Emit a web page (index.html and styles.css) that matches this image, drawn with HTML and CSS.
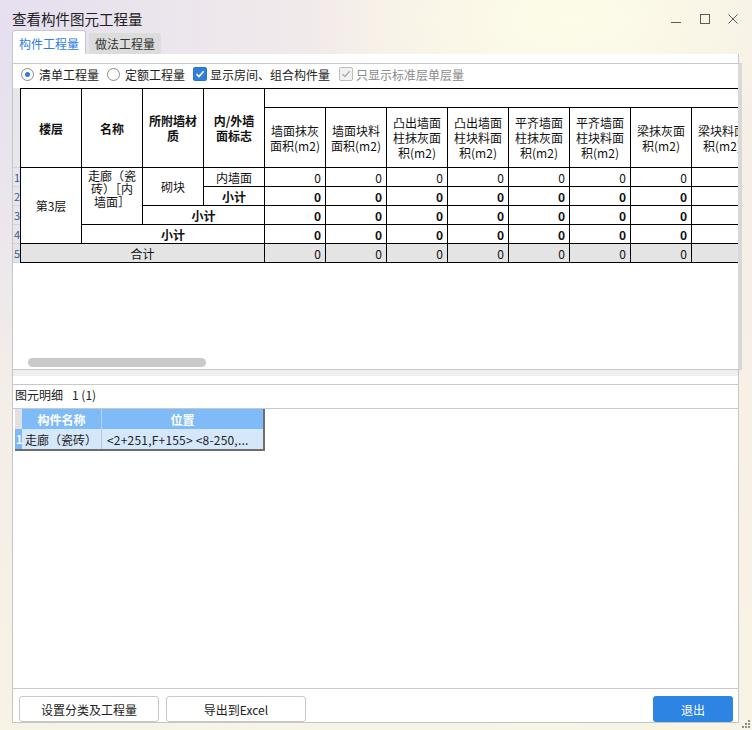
FILE: index.html
```html
<!DOCTYPE html>
<html lang="zh-CN">
<head>
<meta charset="utf-8">
<title>查看构件图元工程量</title>
<link rel="stylesheet" href="styles.css">
</head>
<body>
<div class="window">
  <div class="titlebar">
    <div class="title">查看构件图元工程量</div>
    <div class="ctrls">
      <svg class="ctl ctl-min" width="10" height="10" viewBox="0 0 10 10"><path d="M0 8.5H10" stroke="#5a5a5a" stroke-width="1"/></svg>
      <svg class="ctl ctl-max" width="10" height="10" viewBox="0 0 10 10"><rect x="0.5" y="0.5" width="9" height="9" fill="none" stroke="#5a5a5a" stroke-width="1"/></svg>
      <svg class="ctl ctl-close" width="10" height="10" viewBox="0 0 10 10"><path d="M0.5 0.5L9.5 9.5M9.5 0.5L0.5 9.5" stroke="#5a5a5a" stroke-width="1"/></svg>
    </div>
  </div>

  <div class="tabs">
    <div class="tab tab-active">构件工程量</div>
    <div class="tab tab-idle">做法工程量</div>
  </div>

  <div class="panel">
    <div class="upper">
      <div class="opts">
        <label class="opt opt-gap"><span class="radio radio-on"><span class="dot"></span></span>清单工程量</label>
        <label class="opt opt-gap"><span class="radio"></span>定额工程量</label>
        <label class="opt opt-gap2 opt-tight"><span class="check check-on"><svg width="10" height="10" viewBox="0 0 10 10"><path d="M1.5 5.2L4 7.6L8.6 2.2" fill="none" stroke="#fff" stroke-width="1.6"/></svg></span>显示房间、组合构件量</label>
        <label class="opt opt-tight opt-dis"><span class="check check-dis"><svg width="10" height="10" viewBox="0 0 10 10"><path d="M1.5 5.2L4 7.6L8.6 2.2" fill="none" stroke="#a8a8a8" stroke-width="1.4"/></svg></span>只显示标准层单层量</label>
      </div>
      <div class="tarea">
        <div class="gridwrap">
          <div class="qgrid">
            <!-- header row 1 -->
            <div class="rn rs2"></div>
            <div class="c bt bl rs2 hd">楼层</div>
            <div class="c bt rs2 hd">名称</div>
            <div class="c bt rs2 hd">所附墙材<br>质</div>
            <div class="c bt rs2 hd">内/外墙<br>面标志</div>
            <div class="c bt cs8"></div>
            <!-- header row 2 -->
            <div class="c hn">墙面抹灰<br>面积(m2)</div>
            <div class="c hn">墙面块料<br>面积(m2)</div>
            <div class="c hn">凸出墙面<br>柱抹灰面<br>积(m2)</div>
            <div class="c hn">凸出墙面<br>柱块料面<br>积(m2)</div>
            <div class="c hn">平齐墙面<br>柱抹灰面<br>积(m2)</div>
            <div class="c hn">平齐墙面<br>柱块料面<br>积(m2)</div>
            <div class="c hn">梁抹灰面<br>积(m2)</div>
            <div class="c hn">梁块料面<br>积(m2)</div>
            <!-- data row 1 -->
            <div class="rn">1</div>
            <div class="c bl rs4">第3层</div>
            <div class="c rs3 top">走廊（瓷<br>砖）［内<br>墙面］</div>
            <div class="c rs2">砌块</div>
            <div class="c">内墙面</div>
            <div class="c v">0</div><div class="c v">0</div><div class="c v">0</div><div class="c v">0</div>
            <div class="c v">0</div><div class="c v">0</div><div class="c v">0</div><div class="c v">0</div>
            <!-- data row 2 -->
            <div class="rn">2</div>
            <div class="c b">小计</div>
            <div class="c v b">0</div><div class="c v b">0</div><div class="c v b">0</div><div class="c v b">0</div>
            <div class="c v b">0</div><div class="c v b">0</div><div class="c v b">0</div><div class="c v b">0</div>
            <!-- data row 3 -->
            <div class="rn">3</div>
            <div class="c cs2 b">小计</div>
            <div class="c v b">0</div><div class="c v b">0</div><div class="c v b">0</div><div class="c v b">0</div>
            <div class="c v b">0</div><div class="c v b">0</div><div class="c v b">0</div><div class="c v b">0</div>
            <!-- data row 4 -->
            <div class="rn">4</div>
            <div class="c cs3 b">小计</div>
            <div class="c v b">0</div><div class="c v b">0</div><div class="c v b">0</div><div class="c v b">0</div>
            <div class="c v b">0</div><div class="c v b">0</div><div class="c v b">0</div><div class="c v b">0</div>
            <!-- total row -->
            <div class="rn tot">5</div>
            <div class="c bl cs4 tot">合计</div>
            <div class="c v tot">0</div><div class="c v tot">0</div><div class="c v tot">0</div><div class="c v tot">0</div>
            <div class="c v tot">0</div><div class="c v tot">0</div><div class="c v tot">0</div><div class="c v tot">0</div>
          </div>
        </div>
        <div class="hthumb"></div>
      </div>
    </div>

    <div class="splitter"></div>

    <div class="group">
      <div class="glabel">图元明细<span class="gcount">1 (1)</span></div>
      <div class="lower">
        <div class="dgrid">
          <div class="dn dnh"></div>
          <div class="dh dsep">构件名称</div>
          <div class="dh">位置</div>
          <div class="dn dnr">1</div>
          <div class="dc dcsep">走廊（瓷砖）</div>
          <div class="dc dpos">&lt;2+251,F+155&gt; &lt;8-250,...</div>
        </div>
      </div>
    </div>

    <div class="btnrow">
      <div class="btn btn-w1">设置分类及工程量</div>
      <div class="btn btn-w1">导出到Excel</div>
      <div class="btn btn-primary">退出</div>
    </div>
  </div>

  <div class="grip">
    <span class="gd g1"></span><span class="gd g2"></span><span class="gd g3"></span>
    <span class="gd g4"></span><span class="gd g5"></span><span class="gd g6"></span>
  </div>
</div>
</body>
</html>
```

FILE: styles.css
```css
* { box-sizing: border-box; margin: 0; padding: 0; }

html, body {
  width: 752px;
  height: 730px;
  overflow: hidden;
}

body {
  font-family: "Noto Sans CJK SC", "Noto Sans", sans-serif;
  font-size: 12px;
  color: #222;
  background: #f5f0e8;
}

.window {
  position: relative;
  width: 752px;
  height: 730px;
  background:
    radial-gradient(ellipse 260px 120px at 570px 20px, rgba(253, 252, 232, 1), rgba(253, 252, 232, 0) 100%),
    radial-gradient(ellipse 380px 340px at 0 30px, rgba(229, 223, 240, 1), rgba(229, 223, 240, 0) 100%),
    linear-gradient(180deg, rgba(0, 0, 0, 0) 40%, rgba(248, 245, 228, 0.8) 100%),
    linear-gradient(90deg, #f1ece9 0%, #f5ede9 45%, #f8f2e6 70%, #f6efe6 100%);
}

/* title bar */
.titlebar {
  height: 30px;
  padding-top: 8px;
  padding-left: 12px;
  display: flex;
  align-items: center;
}
.title {
  flex: 1;
  font-size: 14.5px;
  color: #222;
  line-height: 20px;
}
.ctrls {
  display: flex;
  align-items: center;
  margin-right: 14px;
}
.ctl { display: block; }
.ctl-min { margin-right: 19px; }
.ctl-max { margin-right: 18px; }

/* tabs */
.tabs {
  height: 24px;
  margin-left: 12px;
  display: flex;
  align-items: flex-end;
  gap: 3px;
}
.tab {
  display: flex;
  align-items: center;
  justify-content: center;
  font-size: 12px;
  border-radius: 3px 3px 0 0;
}
.tab-active {
  width: 74px;
  height: 24px;
  padding-top: 2px;
  background: #fff;
  border: 1px solid #c8c8c8;
  border-bottom: none;
  color: #2f7be0;
}
.tab-idle {
  width: 72px;
  height: 21px;
  background: #dcdcdc;
  color: #333;
}

/* panel */
.panel {
  margin-left: 12px;
  width: 727px;
  height: 669px;
  background: #fff;
  border-left: 1px solid #c6c6c6;
  border-right: 1px solid #c6c6c6;
  border-bottom: 1px solid #c6c6c6;
  display: flex;
  flex-direction: column;
}

.upper {
  margin-top: 9px;
  height: 307px;
  margin-right: -4px;
  border-top: 1px solid #c8c8c8;
  border-bottom: 1px solid #c8c8c8;
  border-right: 4px solid #d9d9d9;
  display: flex;
  flex-direction: column;
}

.opts {
  height: 24px;
  padding-left: 8px;
  padding-bottom: 4px;
  display: flex;
  align-items: center;
  font-size: 12px;
  color: #222;
}
.opt {
  display: flex;
  align-items: center;
  white-space: nowrap;
}
.opt-gap { gap: 5px; margin-right: 8px; }
.opt-gap2 { margin-right: 9px; }
.opt-tight { gap: 3px; }
.opt-dis { color: #8a8a8a; }

.radio {
  width: 13px;
  height: 13px;
  border: 1px solid #8a8a8a;
  border-radius: 50%;
  background: #fff;
  display: flex;
  align-items: center;
  justify-content: center;
}
.radio-on .dot {
  width: 5px;
  height: 5px;
  border-radius: 50%;
  background: #2f7be0;
}
.check {
  width: 14px;
  height: 14px;
  border-radius: 2px;
  display: flex;
  align-items: center;
  justify-content: center;
}
.check-on {
  background: #2f7fe0;
  border: 1px solid #2a72cc;
}
.check-dis {
  background: #f2f2f2;
  border: 1px solid #bcbcbc;
}

.tarea {
  height: 281px;
  display: flex;
  flex-direction: column;
  overflow: hidden;
}
.gridwrap {
  width: 725px;
  overflow: hidden;
}

.qgrid {
  display: grid;
  grid-template-columns: 7px 62px repeat(11, 61px);
  grid-template-rows: 20px 60px repeat(5, 19px);
  width: max-content;
}

.rn {
  background: #e6e6ec;
  color: #3a5a93;
  font-size: 11px;
  line-height: 18px;
  padding-left: 1px;
  display: flex;
  align-items: center;
  border-bottom: 1px solid #d4d4dc;
}

.c {
  border-right: 1px solid #000;
  border-bottom: 1px solid #000;
  display: flex;
  align-items: center;
  justify-content: center;
  text-align: center;
  white-space: nowrap;
  overflow: hidden;
  font-size: 12px;
  line-height: 17px;
  color: #111;
}
.bt { border-top: 1px solid #000; }
.bl { border-left: 1px solid #000; }
.rs2 { grid-row: span 2; }
.rs3 { grid-row: span 3; }
.rs4 { grid-row: span 4; }
.cs2 { grid-column: span 2; }
.cs3 { grid-column: span 3; }
.cs4 { grid-column: span 4; }
.cs8 { grid-column: span 8; }
.hd { font-weight: 700; line-height: 15px; }
.hn { line-height: 15px; }
.top { align-items: flex-start; padding-top: 1px; line-height: 13px; }
.v { justify-content: flex-end; padding-right: 4px; }
.b { font-weight: 700; }
.tot { background: #e4e4e4; }

.hthumb {
  margin-top: auto;
  margin-bottom: 2px;
  margin-left: 15px;
  width: 178px;
  height: 9px;
  border-radius: 5px;
  background: #c9c9c9;
}

.splitter {
  height: 6px;
  background: #efefef;
}

.group {
  margin-top: 8px;
  border-top: 1px solid #c8c8c8;
}
.glabel {
  height: 23px;
  line-height: 20px;
  padding-left: 2px;
  font-size: 12px;
  color: #222;
}
.gcount { margin-left: 9px; }
.lower {
  height: 281px;
  border-top: 1px solid #c8c8c8;
  border-bottom: 1px solid #c8c8c8;
  padding-left: 2px;
}

.dgrid {
  display: grid;
  grid-template-columns: 7px 80px 161px;
  grid-template-rows: 20px 20px;
  width: 250px;
  border-right: 2px solid #6e6e6e;
  border-bottom: 2px solid #6e6e6e;
}
.dn {
  font-size: 11px;
  display: flex;
  align-items: center;
}
.dnh { background: #e0e0e0; }
.dnr {
  background: #7cb8f6;
  color: #fff;
  font-weight: 700;
  padding-left: 1px;
}
.dh {
  background: #7fbbf6;
  color: #fff;
  font-weight: 700;
  font-size: 12px;
  display: flex;
  align-items: center;
  justify-content: center;
}
.dsep { border-right: 1px solid #b4d5f8; }
.dc {
  background: #d5e8fb;
  color: #222;
  font-size: 12px;
  display: flex;
  align-items: center;
  white-space: nowrap;
  overflow: hidden;
}
.dcsep {
  padding-left: 3px;
  border-right: 1px solid #c4c4c4;
}
.dpos {
  padding-left: 5px;
  font-size: 12px;
  letter-spacing: 0.2px;
}

.btnrow {
  margin-top: 7px;
  height: 26px;
  padding: 0 5px 0 6px;
  display: flex;
  gap: 7px;
}
.btn {
  height: 26px;
  border-radius: 3px;
  display: flex;
  align-items: center;
  justify-content: center;
  font-size: 12px;
  color: #222;
}
.btn-w1 {
  width: 140px;
  background: #fff;
  border: 1px solid #c8c8c8;
}
.btn-primary {
  margin-left: auto;
  width: 80px;
  background: #2e84e2;
  color: #fff;
}

/* resize grip */
.grip {
  position: absolute;
  right: 2px;
  bottom: 2px;
  width: 8px;
  height: 8px;
}
.gd {
  position: absolute;
  width: 2px;
  height: 2px;
  background: #8c8c8c;
}
.g1 { right: 0; bottom: 0; }
.g2 { right: 3px; bottom: 0; }
.g3 { right: 6px; bottom: 0; }
.g4 { right: 0; bottom: 3px; }
.g5 { right: 3px; bottom: 3px; }
.g6 { right: 0; bottom: 6px; }
```
